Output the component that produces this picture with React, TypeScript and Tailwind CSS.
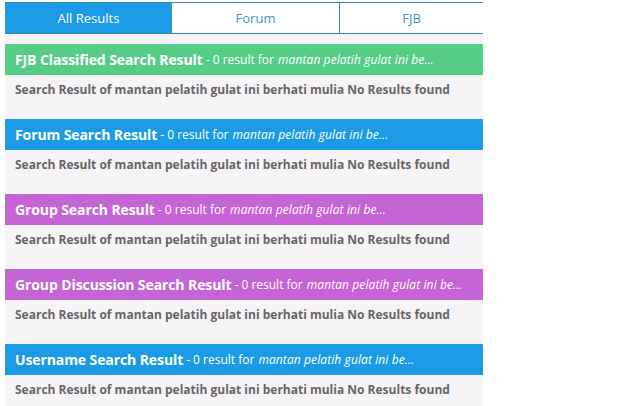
const sections = [
  { title: "FJB Classified Search Result", color: "bg-[#55cd87]" },
  { title: "Forum Search Result", color: "bg-[#1b9be6]" },
  { title: "Group Search Result", color: "bg-[#c564d4]" },
  { title: "Group Discussion Search Result", color: "bg-[#c564d4]" },
  { title: "Username Search Result", color: "bg-[#1b9be6]" },
];

export default function App() {
  return (
    <div className="h-[406px] w-[640px] overflow-hidden bg-white font-['Open_Sans',sans-serif]">
      <div className="ml-[5px] w-[478px] pt-[2px]">
        <div className="flex h-[32px] border-y border-[#2d8cae] text-[13px]">
          <div className="flex w-[167px] items-center justify-center bg-[#1b9be6] pt-[1px] text-white">All Results</div>
          <div className="flex w-[168px] items-center justify-center border-r border-[#2d8cae] pt-[1px] text-[#3f93c4]">Forum</div>
          <div className="flex flex-1 items-center justify-center pt-[1px] text-[#3f93c4]">FJB</div>
        </div>
        <div className="bg-[#f6f4f7] pt-[10px]">
          {sections.map((s) => (
            <div key={s.title} className="h-[75px]">
              <div className={`flex h-[31px] items-center px-[10px] text-white ${s.color}`}>
                <span className="text-[14px] font-bold tracking-[-0.1px]">{s.title}</span>
                <span className="ml-[3px] text-[12px]">- 0 result for</span>
                <span className="ml-[4px] text-[12px] italic tracking-[0.1px]">mantan pelatih gulat ini be...</span>
              </div>
              <p className="px-[10px] pt-[6px] text-[12px] font-bold text-[#666]">
                Search Result of mantan pelatih gulat ini berhati mulia No Results found
              </p>
            </div>
          ))}
        </div>
      </div>
    </div>
  );
}
